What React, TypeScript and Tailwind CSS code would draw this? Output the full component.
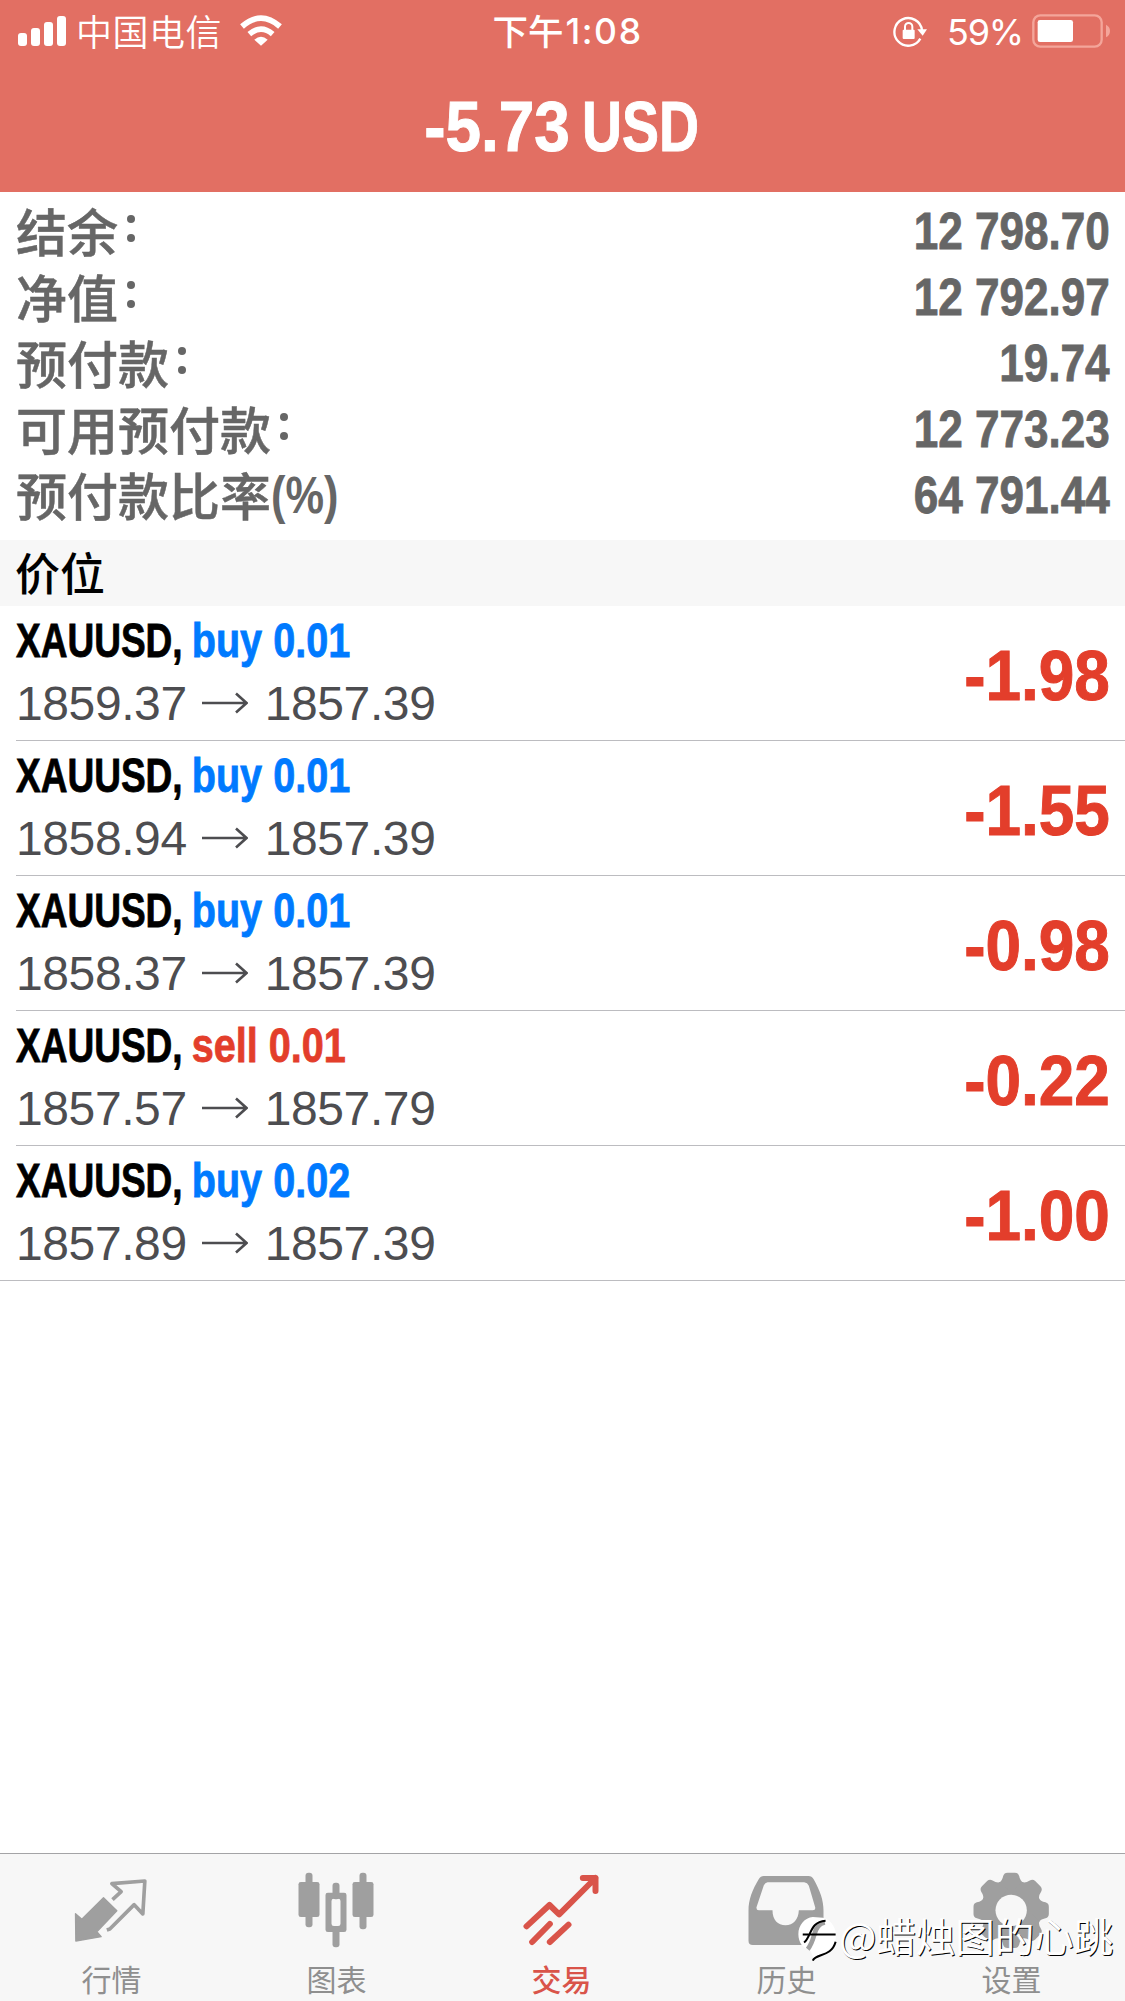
import React from 'react';

const summary = [
  { label: '结余', colon: true, value: '12 798.70' },
  { label: '净值', colon: true, value: '12 792.97' },
  { label: '预付款', colon: true, value: '19.74' },
  { label: '可用预付款', colon: true, value: '12 773.23' },
  { label: '预付款比率', colon: false, value: '64 791.44' },
];

const positions = [
  { id: 1, side: 'buy', volume: '0.01', open: '1859.37', current: '1857.39', profit: '-1.98' },
  { id: 2, side: 'buy', volume: '0.01', open: '1858.94', current: '1857.39', profit: '-1.55' },
  { id: 3, side: 'buy', volume: '0.01', open: '1858.37', current: '1857.39', profit: '-0.98' },
  { id: 4, side: 'sell', volume: '0.01', open: '1857.57', current: '1857.79', profit: '-0.22' },
  { id: 5, side: 'buy', volume: '0.02', open: '1857.89', current: '1857.39', profit: '-1.00' },
];

const iconClass = 'w-[78px] h-20';

function QuotesIcon() {
  return (
    <svg viewBox="220.5 90 234 240" className={iconClass} strokeLinejoin="round">
      <path d="M228 221L247 238L312 173L352 212L292 275L305 290L229 303Z" fill="currentColor" stroke="currentColor" strokeWidth="4" />
      <path d="M339 179L365 155L337 131L436 123L430 222L404 194L331 267L322 270" fill="none" stroke="currentColor" strokeWidth="11" />
    </svg>
  );
}

function ChartIcon() {
  return (
    <svg viewBox="895.5 90 234 240" className={iconClass} fill="currentColor">
      <rect x="918" y="98" width="21" height="164" rx="9" />
      <rect x="897" y="126" width="63" height="105" rx="7" />
      <rect x="999" y="128" width="21" height="50" rx="9" />
      <rect x="999" y="262" width="21" height="60" rx="9" />
      <path fillRule="evenodd" d="M985 158H1034Q1041 158 1041 165V269Q1041 276 1034 276H985Q978 276 978 269V165Q978 158 985 158ZM1003 176Q996 176 996 183V251Q996 258 1003 258H1016Q1023 258 1023 251V183Q1023 176 1016 176Z" />
      <rect x="1080" y="98" width="21" height="170" rx="9" />
      <rect x="1059" y="126" width="63" height="105" rx="7" />
    </svg>
  );
}

function TradeIcon() {
  return (
    <svg viewBox="370.5 90 234 240" className={iconClass} fill="none" stroke="currentColor" strokeWidth="18" strokeLinecap="round" strokeLinejoin="round">
      <path d="M381 259L450 195L479 223L588 114M550 114H588V153M398 306L451 252M451 306L507 254" />
    </svg>
  );
}

function HistoryIcon() {
  return (
    <svg viewBox="70.5 90 234 240" className={iconClass} fill="currentColor">
      <path
        fillRule="evenodd"
        d="M118 108H252Q262 108 267 117C287 153 297 180 297 212V302Q297 315 284 315H85Q72 315 72 302V212C72 178 84 149 103 117Q108 108 118 108ZM129 127Q122 128 118 136L96 202Q95 210 103 211H144C144 240 160 256 183 256C206 256 222 239 223 211H265Q274 210 272 202L253 137Q249 128 239 127Z"
      />
    </svg>
  );
}

function SettingsIcon() {
  return (
    <svg viewBox="745.5 90 234 240" className={iconClass}>
      <g fill="currentColor">
        <circle cx="860" cy="211" r="90" />
        {[0, 45, 90, 135, 180, 225, 270, 315].map((angle) => (
          <path key={angle} transform={`rotate(${angle} 860 211)`} d="M823 128Q833 124 836 108Q839 98 849 98H871Q881 98 884 108Q887 124 897 128V160H823Z" />
        ))}
      </g>
      <circle cx="860" cy="211" r="47" fill="#f7f7f7" />
    </svg>
  );
}

const tabs = [
  { label: '行情', icon: QuotesIcon },
  { label: '图表', icon: ChartIcon },
  { label: '交易', icon: TradeIcon, active: true },
  { label: '历史', icon: HistoryIcon },
  { label: '设置', icon: SettingsIcon },
];

function StatusBar() {
  return (
    <div className="grid grid-cols-3 items-center h-[62px] text-white">
      <div className="flex items-center pl-[18px]">
        <svg viewBox="0 0 48 31" className="w-12 h-[31px] mb-0.5" fill="currentColor">
          <rect x="0" y="18" width="9" height="13" rx="3" />
          <rect x="13" y="13" width="9" height="18" rx="3" />
          <rect x="26" y="7" width="9" height="24" rx="3" />
          <rect x="39" y="1" width="9" height="30" rx="3" />
        </svg>
        <span className="ml-[10px] mb-0.5 text-[36px] leading-[59px] tracking-[0.5px] font-[350]">中国电信</span>
        <svg viewBox="0 0 126 92" className="ml-[18px] mb-0.5 w-[42px] h-[31px]" fill="none" stroke="currentColor" strokeWidth="17">
          <path d="M6 34Q63 -16 120 34" />
          <path d="M28 57Q63 27 98 57" />
          <path d="M43 74Q63 56 83 74L63 92Z" fill="currentColor" stroke="none" />
        </svg>
      </div>
      <div className="flex justify-center pl-2.5 text-[35.5px] leading-[62px] font-medium">
        <span className="-mt-px">下午</span>
        <span className="ml-0.5 pt-px font-[Inter] tracking-[1.6px]">1:08</span>
      </div>
      <div className="flex items-center justify-end pr-[15px]">
        <svg viewBox="277 42 102 96" className="w-[34px] h-8 mb-0.5" fill="none" stroke="currentColor">
          <path d="M359 113A41.5 41.5 0 1 1 364 88" strokeWidth="7" />
          <path d="M350 85H379L366 104Z" fill="currentColor" stroke="none" />
          <rect x="306" y="86" width="36" height="28" rx="3" fill="currentColor" stroke="none" />
          <path d="M313 87V77A11 11 0 0 1 335 77V87" strokeWidth="6" />
        </svg>
        <span className="ml-5 pt-px font-[Inter] text-[36px] leading-[62px] tracking-[-1.2px]">59%</span>
        <svg viewBox="0 0 234 102" className="ml-[9px] mb-0.5 w-[78px] h-[34px]">
          <rect x="4" y="4" width="205" height="94" rx="21" fill="none" stroke="#f4a59a" strokeWidth="7" />
          <rect x="17" y="18" width="106" height="66" rx="7" fill="white" />
          <path d="M222 32Q234 38 234 51Q234 64 222 70Z" fill="#f4a59a" />
        </svg>
      </div>
    </div>
  );
}

export default function App() {
  return (
    <div className="relative flex flex-col w-[1125px] h-[2001px] bg-white overflow-hidden whitespace-nowrap font-['Noto_Sans_CJK_SC',sans-serif]">
      {/* Header */}
      <header className="h-48 bg-[#e26f63]">
        <StatusBar />
        <h1 className="flex justify-center gap-3 h-[130px] pl-[15px] text-[71px] leading-[130px] font-bold text-white font-['Liberation_Sans',sans-serif] [-webkit-text-stroke:1px]">
          <span className="origin-right scale-x-[0.9]">-5.73</span>
          <span className="origin-left scale-x-[0.78]">USD</span>
        </h1>
      </header>

      {/* Account summary */}
      <section className="pt-1.5 pb-3 px-4 text-[#666666]">
        {summary.map((row) => (
          <div key={row.label} className="flex items-center justify-between h-[66px]">
            <div className="flex items-center text-[51px] leading-[62px] font-medium">
              <span className="mb-[3px] [-webkit-text-stroke:0.5px]">{row.label}</span>
              {row.colon ? (
                <span className="flex flex-col gap-[11px] ml-[9px] mb-1.5">
                  <span className="size-2 rounded-full bg-[#666666]" />
                  <span className="size-2 rounded-full bg-[#666666]" />
                </span>
              ) : (
                <span className="pt-0.5 origin-left scale-x-[0.85] font-bold font-['Liberation_Sans',sans-serif]">(%)</span>
              )}
            </div>
            <span className="pt-0.5 -mr-px origin-right scale-x-[0.865] text-[51px] leading-[64px] font-bold font-['Liberation_Sans',sans-serif] [-webkit-text-stroke:0.8px]">{row.value}</span>
          </div>
        ))}
      </section>

      {/* Positions */}
      <h2 className="h-[66px] px-[15px] bg-[#f7f7f7] text-[45px] leading-[63px] font-medium text-black">价位</h2>
      <ul>
        {positions.map((p) => (
          <li key={p.id} className="flex items-center justify-between h-[135px] ml-4 pr-4 border-b border-[#bcbcc0] last:ml-0 last:pl-4">
            <div>
              <div className="flex h-[62px] leading-[60px] text-[48px] font-bold font-['Liberation_Sans',sans-serif] origin-left scale-x-[0.825] [-webkit-text-stroke:0.8px]">
                <span className="w-[213px] text-black origin-left scale-x-[0.935]">XAUUSD,</span>
                <span className={p.side === 'buy' ? 'text-[#007aff]' : 'text-[#e33e2b]'}>
                  {p.side} {p.volume}
                </span>
              </div>
              <div className="flex items-center h-[62px] text-[48px] leading-[62px] tracking-[-0.4px] text-[#4d4d50] font-['Liberation_Sans',sans-serif]">
                <span>{p.open}</span>
                <svg viewBox="0 0 46 22" className="ml-[15px] mb-0.5 mr-[17px] w-[46px] h-[22px]" fill="none" stroke="currentColor" strokeWidth="2.6">
                  <path d="M0 11H44M34 1.5L44.5 11L34 20.5" />
                </svg>
                <span>{p.current}</span>
              </div>
            </div>
            <span className="pt-1 -mr-px origin-right scale-x-[0.9] text-[71px] leading-none font-bold text-[#e33e2b] font-['Liberation_Sans',sans-serif] [-webkit-text-stroke:1px]">{p.profit}</span>
          </li>
        ))}
      </ul>

      {/* Tab bar */}
      <nav className="mt-auto grid grid-cols-5 h-[148px] pt-4 border-t border-[#a4a4a6] bg-[#f7f7f7]">
        {tabs.map(({ label, icon: Icon, active }) => (
          <div key={label} className={`flex flex-col items-center mr-0.5 ${active ? 'text-[#d9544a]' : 'text-[#9f9f9f]'}`}>
            <Icon />
            <span className={`mt-2.5 text-[30px] leading-9 ${active ? 'font-medium' : 'text-[#8f8f8f]'}`}>{label}</span>
          </div>
        ))}
      </nav>

      {/* Author mark */}
      <div className="absolute left-[798px] top-[1911px] flex items-center h-12 text-white">
        <svg viewBox="218 230 116 140" className="w-[39px] h-[47px] mt-1.5">
          <path d="M262 236C238 238 219 260 219 287C219 312 234 331 254 334L264 358C312 346 333 320 331 284C328 262 312 242 292 238Z" fill="white" />
          <path d="M247 332Q258 318 266 290Q274 256 298 252" fill="none" stroke="#9f9f9f" strokeWidth="14" />
          <path d="M236 312C258 296 252 250 300 247M232 288H330M262 366C270 344 318 356 330 310" fill="none" stroke="black" strokeWidth="6" />
        </svg>
        <span className="ml-0.5 text-[39.5px] leading-[48px] [text-shadow:1px_1px_0_#000]">@蜡烛图的心跳</span>
      </div>
    </div>
  );
}
